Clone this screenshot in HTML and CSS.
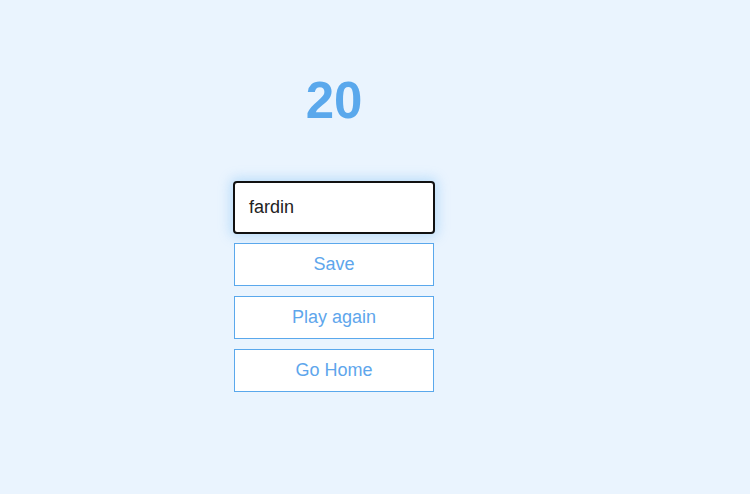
FILE: index.html
```html
<!DOCTYPE html>
<html>
<head>
<meta charset="utf-8">
<link rel="stylesheet" href="styles.css">
</head>
<body>
<main class="panel">
  <h1 class="score">20</h1>
  <div class="name-box">fardin</div>
  <button class="btn">Save</button>
  <button class="btn">Play again</button>
  <button class="btn">Go Home</button>
</main>
</body>
</html>
```
FILE: styles.css
```css
html, body {
  margin: 0;
  padding: 0;
  background: #eaf4fe;
  height: 100%;
}
body {
  font-family: "Liberation Sans", Arial, sans-serif;
}
.panel {
  width: 200px;
  margin-left: 234px;
  padding-top: 76px;
  display: flex;
  flex-direction: column;
}
.score {
  margin: 0;
  font-size: 51px;
  line-height: 50px;
  font-weight: 700;
  color: #5aa8ec;
  text-align: center;
}
.name-box {
  box-sizing: border-box;
  margin-top: 55px;
  margin-left: -1px;
  width: 202px;
  height: 53px;
  border: 2px solid #111;
  border-radius: 4px;
  background: #fff;
  padding-left: 14px;
  display: flex;
  align-items: center;
  font-size: 18px;
  color: #222;
  box-shadow: 0 0 12px 3px rgba(120, 190, 245, 0.4);
}
.btn {
  box-sizing: border-box;
  margin-top: 9px;
  width: 200px;
  height: 43px;
  border: 1px solid #5aa8ec;
  background: #fff;
  color: #5ea6ec;
  font-family: "Liberation Sans", Arial, sans-serif;
  font-size: 18px;
  padding: 0;
}
.btn + .btn {
  margin-top: 10px;
}
```
